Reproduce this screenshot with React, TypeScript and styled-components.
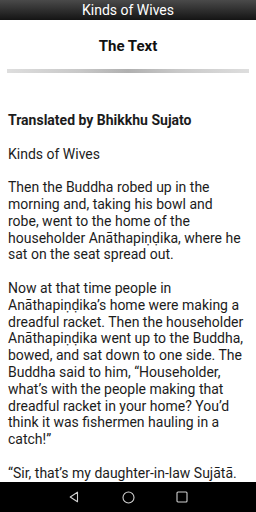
import * as React from "react";
import styled, { createGlobalStyle } from "styled-components";

const Global = createGlobalStyle`
  html, body {
    margin: 0;
    padding: 0;
    background: #ffffff;
  }
  body {
    font-family: Roboto, "Noto Sans", "Liberation Sans", sans-serif;
  }
`;

const Screen = styled.div`
  width: 256px;
  height: 512px;
  display: flex;
  flex-direction: column;
  overflow: hidden;
  background: #fff;
`;

const TopBar = styled.div`
  height: 20px;
  flex: none;
  display: flex;
  align-items: center;
  justify-content: center;
  background: linear-gradient(to bottom, #4a4a4a, #141414);
  color: #fff;
  font-size: 14px;
`;

const Body = styled.div`
  flex: 1;
  overflow: hidden;
  padding: 0 7px;
`;

const Title = styled.h1`
  margin: 16px 0 0;
  height: 20px;
  line-height: 20px;
  text-align: center;
  font-size: 15px;
  font-weight: 700;
  color: #111;
`;

const Divider = styled.div`
  margin-top: 13px;
  height: 4px;
  background: linear-gradient(
    to right,
    #dedede 0%,
    #c8c8c8 30%,
    #b0b0b0 50%,
    #c8c8c8 70%,
    #dedede 100%
  );
`;

const Text = styled.div`
  margin-top: 39px;
  padding: 0 5px 0 1px;
  font-size: 14px;
  line-height: 16.8px;
  color: #1c1c1c;
`;

const Para = styled.p<{ $bold?: boolean }>`
  margin: 0 0 16.8px;
  font-weight: ${(p) => (p.$bold ? 700 : 400)};
`;

const NavBar = styled.div`
  height: 30px;
  flex: none;
  background: #000;
  display: flex;
  align-items: center;
  justify-content: center;
  gap: 38px;
`;

const NavButton = styled.div`
  width: 16px;
  height: 16px;
  display: flex;
  align-items: center;
  justify-content: center;
`;

const paragraphs = [
  "Kinds of Wives",
  "Then the Buddha robed up in the morning and, taking his bowl and robe, went to the home of the householder Anāthapiṇḍika, where he sat on the seat spread out.",
  "Now at that time people in Anāthapiṇḍika’s home were making a dreadful racket. Then the householder Anāthapiṇḍika went up to the Buddha, bowed, and sat down to one side. The Buddha said to him, “Householder, what’s with the people making that dreadful racket in your home? You’d think it was fishermen hauling in a catch!”",
  "“Sir, that’s my daughter-in-law Sujātā.",
];

export default function App() {
  return (
    <Screen>
      <Global />
      <TopBar>Kinds of Wives</TopBar>
      <Body>
        <Title>The Text</Title>
        <Divider />
        <Text>
          <Para $bold>Translated by Bhikkhu Sujato</Para>
          {paragraphs.map((t, i) => (
            <Para key={i}>{t}</Para>
          ))}
        </Text>
      </Body>
      <NavBar>
        <NavButton>
          <svg width="12" height="12" viewBox="0 0 12 12">
            <path d="M9.5 1.2 L9.5 10.8 L2.2 6 Z" fill="none" stroke="#d0d0d0" strokeWidth="1.1" strokeLinejoin="round" />
          </svg>
        </NavButton>
        <NavButton>
          <svg width="13" height="13" viewBox="0 0 13 13">
            <circle cx="6.5" cy="6.5" r="5.5" fill="none" stroke="#d0d0d0" strokeWidth="1.1" />
          </svg>
        </NavButton>
        <NavButton>
          <svg width="12" height="12" viewBox="0 0 12 12">
            <rect x="1" y="1" width="10" height="10" rx="1" fill="none" stroke="#d0d0d0" strokeWidth="1.1" />
          </svg>
        </NavButton>
      </NavBar>
    </Screen>
  );
}
